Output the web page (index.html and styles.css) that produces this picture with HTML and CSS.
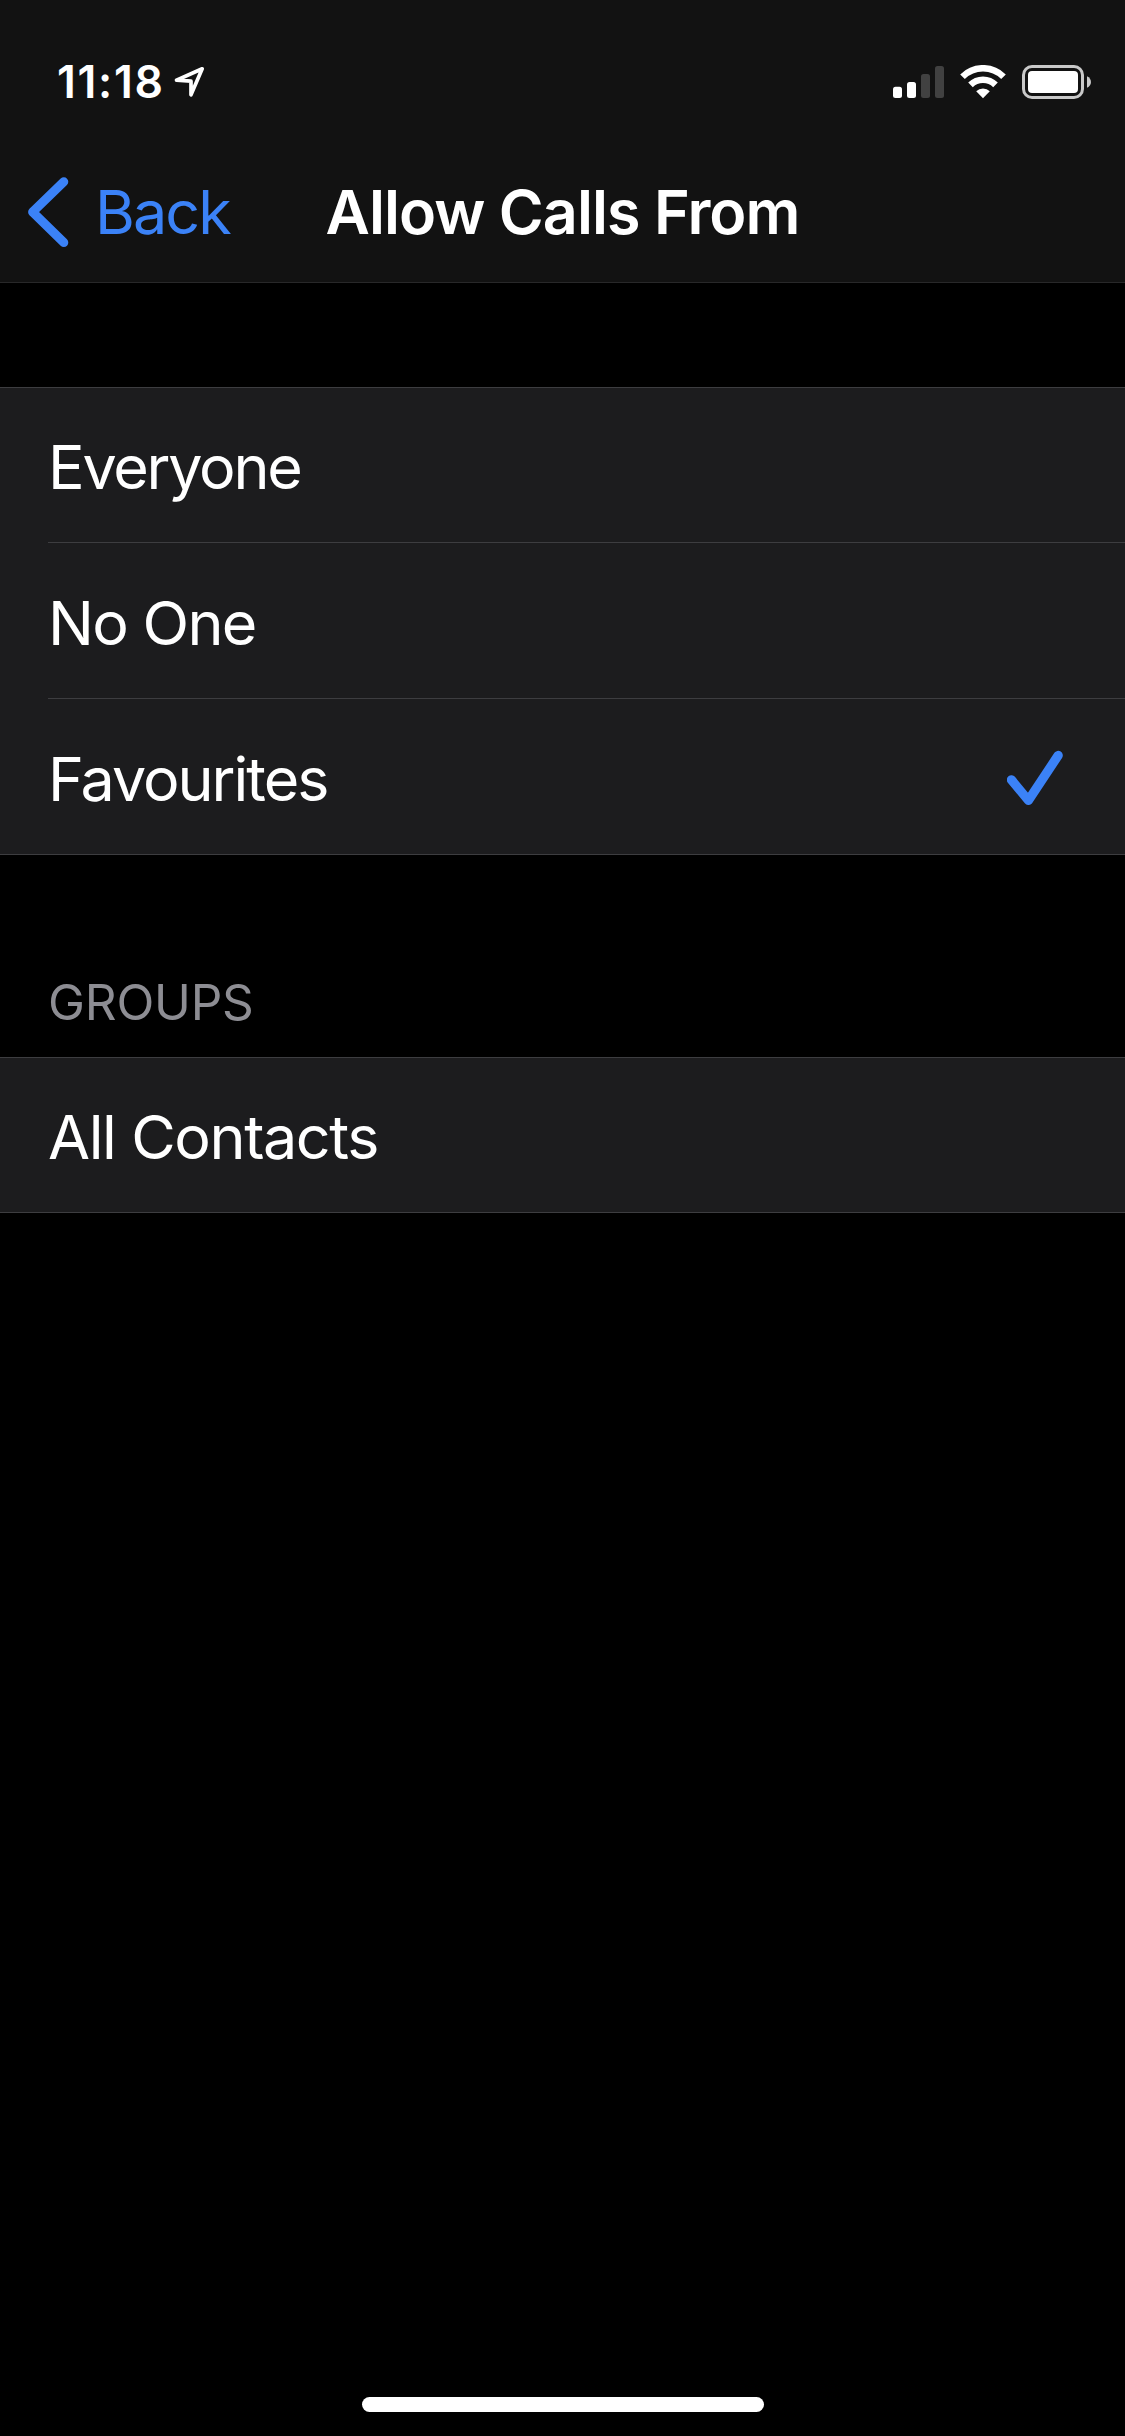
FILE: index.html
```html
<!DOCTYPE html>
<html lang="en">
<head>
<meta charset="utf-8">
<title>Allow Calls From</title>
<link rel="stylesheet" href="styles.css">
</head>
<body>
<div class="screen">
  <header class="header">
    <div class="status">
      <div class="status-left">
        <span class="time">11:18</span>
        <svg class="location" width="36" height="36" viewBox="172 64 36 36"><path d="M176.5 80.2 202.2 68.8 191 94.8V81.2Z" fill="none" stroke="#fff" stroke-width="3.7" stroke-linejoin="round"/></svg>
      </div>
      <div class="status-right">
        <svg width="51" height="34" viewBox="893 65 51 34">
          <rect x="893" y="86.8" width="9" height="11.2" rx="2.5" fill="#fff"/>
          <rect x="907" y="82" width="9" height="16" rx="2.5" fill="#fff"/>
          <rect x="921" y="74" width="9" height="24" rx="2.5" fill="#414141"/>
          <rect x="935" y="66" width="9" height="32" rx="2.5" fill="#414141"/>
        </svg>
        <svg width="46" height="34" viewBox="960 65 46 34">
          <g fill="none" stroke="#fff" stroke-width="6.5">
            <path d="M962.5 76.7a29 29 0 0 1 41 0"/>
            <path d="M970.5 84.9a17.7 17.7 0 0 1 25 0"/>
          </g>
          <path d="M976.2 91.3a9.6 9.6 0 0 1 13.6 0L983 98.2Z" fill="#fff"/>
        </svg>
        <svg width="70" height="34" viewBox="1022 65 70 34">
          <rect x="1023.5" y="66.5" width="59" height="31" rx="8.5" fill="none" stroke="#c9c9c9" stroke-width="3"/>
          <rect x="1028" y="71" width="50" height="22" rx="4" fill="#fff"/>
          <path d="M1087 76.3c5.3 2.3 5.3 9.1 0 11.4Z" fill="#c9c9c9"/>
        </svg>
      </div>
    </div>
    <nav class="nav">
      <a class="back">
        <svg width="44" height="70" viewBox="28 177 44 70"><path d="M63.8 181.8 32.6 212 63.8 242.5" fill="none" stroke="#3b82f7" stroke-width="9" stroke-linecap="round" stroke-linejoin="round"/></svg>
        <span class="back-label">Back</span>
      </a>
      <h1 class="title">Allow Calls From</h1>
    </nav>
  </header>
  <main class="content">
    <ul class="list">
      <li class="row"><span class="everyone">Everyone</span></li>
      <li class="row"><span class="no-one">No One</span></li>
      <li class="row"><span class="favourites">Favourites</span>
        <svg class="check" width="56" height="56" viewBox="1007 750 56 56"><path d="M1011.4 779.8 1028.4 800.4 1058.2 755.4" fill="none" stroke="#3b82f7" stroke-width="9.2" stroke-linecap="round" stroke-linejoin="round"/></svg>
      </li>
    </ul>
    <h2 class="group-title">GROUPS</h2>
    <ul class="list">
      <li class="row"><span class="contacts">All Contacts</span></li>
    </ul>
  </main>
  <div class="home"></div>
</div>
</body>
</html>
```
FILE: styles.css
```css
* { box-sizing: border-box; }
body {
  margin: 0;
  background: #000;
  color: #fff;
  font-family: Inter, "Liberation Sans", sans-serif;
}
svg { display: block; flex: none; }
.screen {
  width: 1125px;
  height: 2436px;
  display: flex;
  flex-direction: column;
  overflow: hidden;
}
.header {
  height: 283px;
  background: #121212;
  border-bottom: 1px solid #282829;
}
.status {
  height: 132px;
  padding: 64px 33px 0 57px;
  display: flex;
  justify-content: space-between;
}
.status-left { display: flex; }
.time {
  width: 115px;
  font-size: 44.5px;
  font-weight: 600;
  line-height: 36px;
  letter-spacing: 1.7px;
}
.status-right {
  display: flex;
  gap: 16px;
  padding-top: 1px;
}
.nav {
  height: 150px;
  padding: 0 28px;
  display: grid;
  grid-template-columns: 1fr auto 1fr;
}
.back {
  display: flex;
  padding-top: 45px;
  color: #3b82f7;
}
.back-label {
  padding-left: 23px;
  font-size: 61px;
  line-height: 70px;
  letter-spacing: -1.9px;
}
.title {
  margin: 0;
  padding-top: 45px;
  font-size: 61px;
  font-weight: 600;
  line-height: 70px;
  letter-spacing: -0.95px;
}
.content {
  flex: 1;
  padding-top: 104px;
}
.list {
  margin: 0;
  padding: 0;
  list-style: none;
  background: #1c1c1e;
  border-top: 1px solid #3d3d40;
  border-bottom: 1px solid #3d3d40;
}
.row {
  height: 154px;
  margin-left: 48px;
  padding-right: 62px;
  display: flex;
  align-items: center;
  justify-content: space-between;
  font-size: 61px;
  line-height: 76px;
}
.row span { padding-top: 4px; }
.check { margin-top: 2px; }
.everyone { letter-spacing: -2.25px; }
.no-one { letter-spacing: -1.7px; }
.favourites { letter-spacing: -2px; }
.contacts { letter-spacing: -1.4px; }
.row + .row {
  height: 156px;
  border-top: 1px solid #3d3d40;
}
.group-title {
  margin: 0;
  height: 202px;
  padding: 116px 0 0 48px;
  color: #8d8d93;
  font-size: 49.5px;
  font-weight: 400;
  line-height: 62px;
  letter-spacing: -0.2px;
}
.home {
  width: 402px;
  height: 15px;
  margin: 0 0 24px 362px;
  border-radius: 8px;
  background: #fff;
}
```
